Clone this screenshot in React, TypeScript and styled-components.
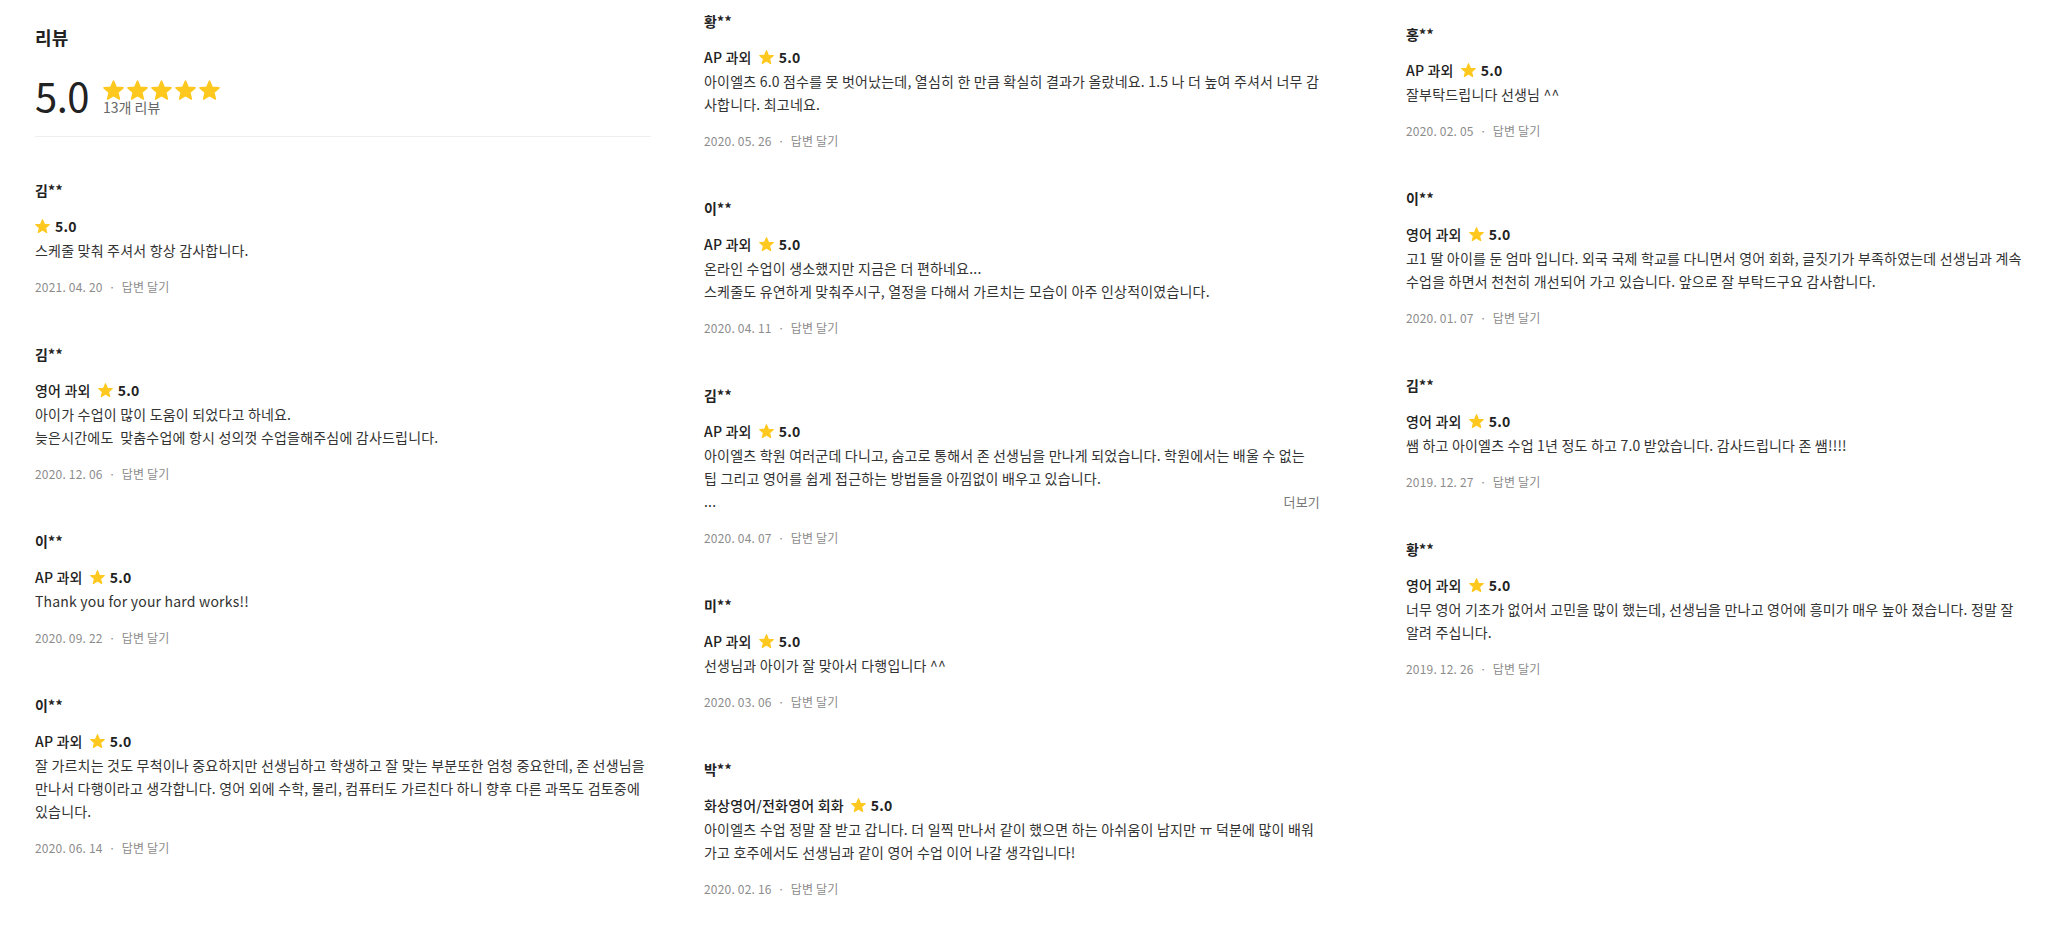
import React from "react";
import styled, { createGlobalStyle } from "styled-components";

const GlobalStyle = createGlobalStyle`
  html, body { margin: 0; padding: 0; background: #fff; }
  body {
    font-family: "Noto Sans CJK KR", "Noto Sans", sans-serif;
    color: #333;
    letter-spacing: 0.2px;
    -webkit-font-smoothing: antialiased;
  }
`;

type Review = {
  name: string;
  category?: string;
  body: string;
  date: string;
  more?: boolean;
};

const col1: Review[] = [
  { name: "김**", body: "스케줄 맞춰 주셔서 항상 감사합니다.", date: "2021. 04. 20" },
  {
    name: "김**",
    category: "영어 과외",
    body: "아이가 수업이 많이 도움이 되었다고 하네요.\n늦은시간에도  맞춤수업에 항시 성의껏 수업을해주심에 감사드립니다.",
    date: "2020. 12. 06",
  },
  { name: "이**", category: "AP 과외", body: "Thank you for your hard works!!", date: "2020. 09. 22" },
  {
    name: "이**",
    category: "AP 과외",
    body: "잘 가르치는 것도 무척이나 중요하지만 선생님하고 학생하고 잘 맞는 부분또한 엄청 중요한데, 존 선생님을 만나서 다행이라고 생각합니다. 영어 외에 수학, 물리, 컴퓨터도 가르친다 하니 향후 다른 과목도 검토중에 있습니다.",
    date: "2020. 06. 14",
  },
];

const col2: Review[] = [
  {
    name: "황**",
    category: "AP 과외",
    body: "아이엘츠 6.0 점수를 못 벗어났는데, 열심히 한 만큼 확실히 결과가 올랐네요. 1.5 나 더 높여 주셔서 너무 감사합니다. 최고네요.",
    date: "2020. 05. 26",
  },
  {
    name: "이**",
    category: "AP 과외",
    body: "온라인 수업이 생소했지만 지금은 더 편하네요...\n스케줄도 유연하게 맞춰주시구, 열정을 다해서 가르치는 모습이 아주 인상적이였습니다.",
    date: "2020. 04. 11",
  },
  {
    name: "김**",
    category: "AP 과외",
    body: "아이엘츠 학원 여러군데 다니고, 숨고로 통해서 존 선생님을 만나게 되었습니다. 학원에서는 배울 수 없는 팁 그리고 영어를 쉽게 접근하는 방법들을 아낌없이 배우고 있습니다.",
    date: "2020. 04. 07",
    more: true,
  },
  { name: "미**", category: "AP 과외", body: "선생님과 아이가 잘 맞아서 다행입니다 ^^", date: "2020. 03. 06" },
  {
    name: "박**",
    category: "화상영어/전화영어 회화",
    body: "아이엘츠 수업 정말 잘 받고 갑니다. 더 일찍 만나서 같이 했으면 하는 아쉬움이 남지만 ㅠ 덕분에 많이 배워 가고 호주에서도 선생님과 같이 영어 수업 이어 나갈 생각입니다!",
    date: "2020. 02. 16",
  },
];

const col3: Review[] = [
  { name: "홍**", category: "AP 과외", body: "잘부탁드립니다 선생님 ^^", date: "2020. 02. 05" },
  {
    name: "이**",
    category: "영어 과외",
    body: "고1 딸 아이를 둔 엄마 입니다. 외국 국제 학교를 다니면서 영어 회화, 글짓기가 부족하였는데 선생님과 계속 수업을 하면서 천천히 개선되어 가고 있습니다. 앞으로 잘 부탁드구요 감사합니다.",
    date: "2020. 01. 07",
  },
  {
    name: "김**",
    category: "영어 과외",
    body: "쌤 하고 아이엘츠 수업 1년 정도 하고 7.0 받았습니다. 감사드립니다 존 쌤!!!!",
    date: "2019. 12. 27",
  },
  {
    name: "황**",
    category: "영어 과외",
    body: "너무 영어 기초가 없어서 고민을 많이 했는데, 선생님을 만나고 영어에 흥미가 매우 높아 졌습니다. 정말 잘 알려 주십니다.",
    date: "2019. 12. 26",
  },
];

const Page = styled.div`
  display: flex;
  align-items: flex-start;
  padding-left: 35px;
  min-height: 935px;
  box-sizing: border-box;
`;

const Column = styled.div<{ $ml?: number; $pt?: number }>`
  width: 616px;
  flex: none;
  margin-left: ${(p) => p.$ml ?? 0}px;
  padding-top: ${(p) => p.$pt ?? 0}px;
`;

const Header = styled.div`
  padding-top: 24px;
  margin-bottom: 32px;
`;

const Title = styled.h2`
  margin: 0;
  font-size: 18px;
  line-height: 26px;
  font-weight: 700;
  color: #222;
`;

const ScoreRow = styled.div`
  display: flex;
  align-items: flex-end;
  margin-top: 21px;
`;

const BigScore = styled.div`
  font-size: 40px;
  line-height: 48px;
  font-weight: 400;
  color: #222;
  letter-spacing: -0.5px;
`;

const StarsBlock = styled.div`
  display: flex;
  flex-direction: column;
  margin-left: 14px;
  margin-bottom: 3px;
`;

const StarRow = styled.div`
  display: flex;
  gap: 3px;
  height: 20px;
`;

const CountText = styled.div`
  font-size: 14px;
  line-height: 18px;
  color: #666;
  margin-top: -2px;
  letter-spacing: 0;
`;

const Divider = styled.div`
  height: 1px;
  background: #eeeeee;
  margin-top: 17px;
`;

const Item = styled.div`
  padding: 10px 0 37px;
`;

const Name = styled.div`
  font-size: 14px;
  line-height: 22px;
  font-weight: 700;
  color: #222;
`;

const RatingRow = styled.div`
  display: flex;
  align-items: center;
  margin-top: 14px;
  height: 22px;
  font-size: 14px;
  color: #222;
`;

const Category = styled.span`
  font-weight: 500;
  margin-right: 7px;
`;

const Score = styled.span`
  font-weight: 700;
  margin-left: 5px;
`;

const Body = styled.div`
  margin-top: 2px;
  font-size: 14px;
  line-height: 23px;
  color: #333;
  white-space: pre-wrap;
`;

const MoreRow = styled.div`
  display: flex;
  justify-content: space-between;
  align-items: baseline;
  font-size: 14px;
  line-height: 23px;
  color: #333;
`;

const MoreButton = styled.span`
  font-size: 13px;
  color: #777;
  cursor: pointer;
`;

const Meta = styled.div`
  margin-top: 16px;
  font-size: 12px;
  line-height: 18px;
  color: #8c8c8c;
  display: flex;
  align-items: center;
`;

const Dot = styled.span`
  margin: 0 6px;
`;

const Reply = styled.span`
  cursor: pointer;
`;

const Star: React.FC<{ size: number }> = ({ size }) => (
  <svg width={size} height={size * 0.965} viewBox="1 1 22 21.27" aria-hidden="true">
    <path
      d="M12 17.27L18.18 21l-1.64-7.03L22 9.24l-7.19-.61L12 2 9.19 8.63 2 9.24l5.46 4.73L5.82 21z"
      fill="#FFC81E"
      stroke="#FFC81E"
      strokeWidth={1.6}
      strokeLinejoin="round"
    />
  </svg>
);

const ReviewItem: React.FC<{ r: Review }> = ({ r }) => (
  <Item>
    <Name>{r.name}</Name>
    <RatingRow>
      {r.category && <Category>{r.category}</Category>}
      <Star size={15} />
      <Score>5.0</Score>
    </RatingRow>
    <Body>{r.body}</Body>
    {r.more && (
      <MoreRow>
        <span>...</span>
        <MoreButton>더보기</MoreButton>
      </MoreRow>
    )}
    <Meta>
      <span>{r.date}</span>
      <Dot>·</Dot>
      <Reply>답변 달기</Reply>
    </Meta>
  </Item>
);

export default function App() {
  return (
    <>
      <GlobalStyle />
      <Page>
        <Column>
          <Header>
            <Title>리뷰</Title>
            <ScoreRow>
              <BigScore>5.0</BigScore>
              <StarsBlock>
                <StarRow>
                  {[0, 1, 2, 3, 4].map((i) => (
                    <Star key={i} size={21} />
                  ))}
                </StarRow>
                <CountText>13개 리뷰</CountText>
              </StarsBlock>
            </ScoreRow>
            <Divider />
          </Header>
          {col1.map((r, i) => (
            <ReviewItem key={i} r={r} />
          ))}
        </Column>
        <Column $ml={53}>
          {col2.map((r, i) => (
            <ReviewItem key={i} r={r} />
          ))}
        </Column>
        <Column $ml={86} $pt={13}>
          {col3.map((r, i) => (
            <ReviewItem key={i} r={r} />
          ))}
        </Column>
      </Page>
    </>
  );
}
